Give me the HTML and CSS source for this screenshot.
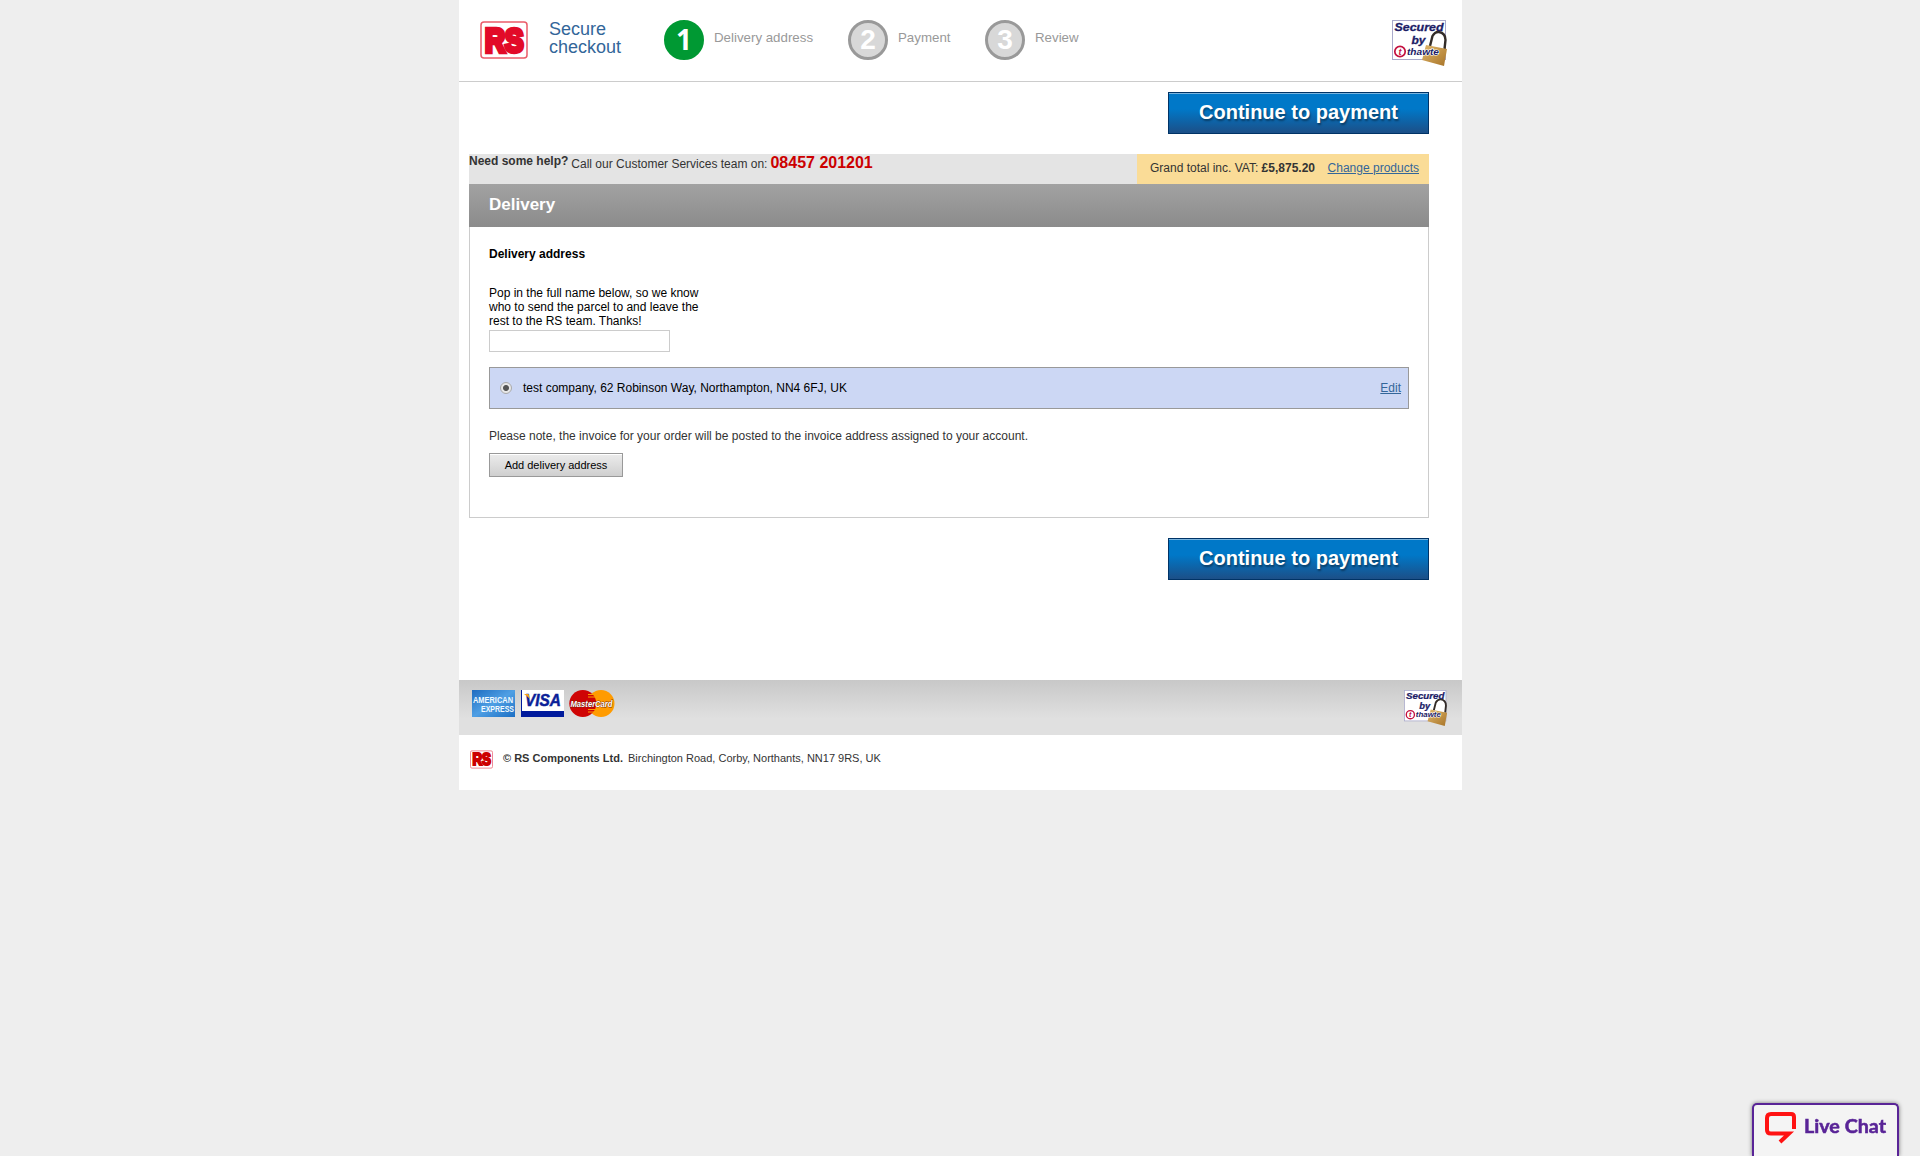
FILE: index.html
```html
<!DOCTYPE html>
<html lang="en">
<head>
<meta charset="utf-8">
<title>Secure checkout</title>
<link rel="stylesheet" href="styles.css">
</head>
<body>
<svg class="defs" aria-hidden="true">
  <defs>
    <linearGradient id="brass" x1="0" y1="0" x2="1" y2="1"><stop offset="0" stop-color="#e0b76c"/><stop offset="1" stop-color="#a87428"/></linearGradient>
    <linearGradient id="amex" x1="0" y1="0" x2="1" y2="1"><stop offset="0" stop-color="#1f6cc0"/><stop offset=".5" stop-color="#4f9fe4"/><stop offset="1" stop-color="#1c6fc4"/></linearGradient>
    <symbol id="rs" viewBox="0 0 48 38">
      <rect x="1" y="1" width="46" height="36" rx="3" fill="#fff" stroke="#ea5c6a" stroke-width="1.5"/>
      <text x="5" y="31" font-size="33" font-weight="bold" textLength="38.5" lengthAdjust="spacingAndGlyphs" fill="currentColor" stroke="currentColor" stroke-width="4.4" stroke-linejoin="miter">RS</text>
    </symbol>
    <symbol id="thawte" viewBox="0 0 56 46">
      <rect x=".5" y=".5" width="53" height="39" fill="#fff" stroke="#aaaacb"/>
      <path d="M38 26L40.5 16Q43 11.5 47 12Q53.5 13 53.5 20L52.5 29" fill="#fff" stroke="#332c28" stroke-width="2.4"/>
      <path d="M34 25L55 29L52 46L30 40Z" fill="url(#brass)"/>
      <g fill="#1c1c66" stroke="#1c1c66" stroke-width=".3" font-weight="bold" font-style="italic">
        <text x="2.5" y="11.3" font-size="11" textLength="49" lengthAdjust="spacingAndGlyphs">Secured</text>
        <text x="19.5" y="24.3" font-size="11" textLength="14" lengthAdjust="spacingAndGlyphs">by</text>
        <text x="15" y="34.8" font-size="9" textLength="32" lengthAdjust="spacingAndGlyphs" stroke="#fff" stroke-width="1.2" paint-order="stroke">thawte</text>
      </g>
      <circle cx="8" cy="31.5" r="5.2" fill="#fff" stroke="#c4103f" stroke-width="1.7"/>
      <text x="6.4" y="34.8" font-size="9" font-weight="bold" font-style="italic" fill="#c4103f">t</text>
    </symbol>
  </defs>
</svg>

<div class="page">
  <header class="header">
    <svg class="logo" width="48" height="38"><use href="#rs"/></svg>
    <h1 class="title">Secure<br>checkout</h1>
    <ol class="steps">
      <li class="step step-one"><span class="num num-active">1</span><span class="label">Delivery address</span></li>
      <li class="step step-two"><span class="num">2</span><span class="label">Payment</span></li>
      <li class="step"><span class="num">3</span><span class="label">Review</span></li>
    </ol>
    <svg class="seal" width="56" height="46"><use href="#thawte"/></svg>
  </header>

  <main class="main">
    <div class="actions"><button class="primary">Continue to payment</button></div>
    <div class="infobar">
      <div class="help"><strong class="need">Need some help?</strong><span class="call">Call our Customer Services team on:</span><strong class="phone">08457 201201</strong></div>
      <div class="total"><span>Grand total inc. VAT: <strong>£5,875.20</strong></span><a href="#">Change products</a></div>
    </div>
    <section class="panel">
      <h2 class="panel-head">Delivery</h2>
      <div class="panel-body">
        <h3 class="subhead">Delivery address</h3>
        <label class="intro" for="name">Pop in the full name below, so we know<br>who to send the parcel to and leave the<br>rest to the RS team. Thanks!</label>
        <input class="name" id="name" type="text">
        <div class="address">
          <span class="radio"></span>
          <span class="address-text">test company, 62 Robinson Way, Northampton, NN4 6FJ, UK</span>
          <a href="#">Edit</a>
        </div>
        <p class="note">Please note, the invoice for your order will be posted to the invoice address assigned to your account.</p>
        <button class="secondary">Add delivery address</button>
      </div>
    </section>
    <div class="actions actions-bottom"><button class="primary">Continue to payment</button></div>
  </main>

  <div class="cards">
    <svg width="43" height="27" viewBox="0 0 43 27">
      <rect width="43" height="27" fill="url(#amex)"/>
      <g font-size="8.4" font-weight="bold" fill="#f2faff">
        <text x="1" y="12.5" textLength="40" lengthAdjust="spacingAndGlyphs">AMERICAN</text>
        <text x="9" y="21.5" textLength="33" lengthAdjust="spacingAndGlyphs">EXPRESS</text>
      </g>
    </svg>
    <svg class="visa" width="43" height="27" viewBox="0 0 43 27">
      <path d="M0 0H43V27H0Z" fill="#fff"/><path d="M0 21H43V27H0ZM0 0H1V27H0Z" fill="#001a9c"/>
      <text x="4" y="16.3" font-size="17" font-weight="bold" font-style="italic" fill="#0b1f98" stroke="#0b1f98" stroke-width=".5" textLength="36" lengthAdjust="spacingAndGlyphs">VISA</text>
      <path d="M3 4H7.5L9 9Q6 6 3 4Z" fill="#f5a01a"/>
    </svg>
    <svg class="mc" width="46" height="27" viewBox="0 0 46 27">
      <circle cx="32" cy="13.5" r="13.5" fill="#ff9b00"/><circle cx="13.8" cy="13.5" r="13.5" fill="#cf0404"/>
      <path d="M19 4.5H26M19 7H27M19 19.5H27M19 22H26" stroke="#ff9b00" stroke-width="1"/>
      <text x="1.5" y="16.8" font-size="9.5" font-weight="bold" font-style="italic" fill="#fff" stroke="#70230c" stroke-width=".8" paint-order="stroke" textLength="42" lengthAdjust="spacingAndGlyphs">MasterCard</text>
    </svg>
    <svg class="seal-small" width="44" height="36"><use href="#thawte"/></svg>
  </div>
  <footer class="footer">
    <svg class="logo-small" width="23" height="19"><use href="#rs"/></svg>
    <strong class="company">© RS Components Ltd.</strong><span>Birchington Road, Corby, Northants, NN17 9RS, UK</span>
  </footer>
</div>

<div class="chat">
  <svg width="32" height="32" viewBox="0 0 32 32"><path d="M29 17V5Q29 2 26 2H6Q2 2 2 6V18Q2 21.5 6 21.5H24L15 30" fill="none" stroke="#ff1212" stroke-width="4"/></svg>
  <svg class="chat-label" width="84" height="22"><text x="0" y="15.5" textLength="82" lengthAdjust="spacingAndGlyphs">Live Chat</text></svg>
</div>
</body>
</html>
```
FILE: styles.css
```css
* { box-sizing: border-box; }
body {
  margin: 0;
  height: 1156px;
  overflow: hidden;
  background: #eee;
  color: #333;
  font: 12px/14px "Liberation Sans", Arial, sans-serif;
}
h1, h2, h3, p, ol { margin: 0; padding: 0; font-weight: normal; }
a { color: #369; text-decoration: underline; }
button { font-family: inherit; padding: 0; border-radius: 0; display: block; }
svg { display: block; flex: none; }
.defs { position: absolute; width: 0; height: 0; }
.page { width: 1003px; height: 790px; margin-left: 459px; background: #fff; white-space: nowrap; }

.header { display: flex; align-items: flex-start; height: 82px; border-bottom: 1px solid #ccc; padding: 20px 14px 0 21px; }
.logo { margin-top: 1px; color: #e20a28; }
.title { width: 115px; margin-left: 21px; font-size: 18px; line-height: 18px; color: #369; }
.steps { display: flex; list-style: none; }
.step { display: flex; }
.step-one { width: 184px; }
.step-two { width: 137px; }
.num { width: 40px; height: 40px; border-radius: 50%; border: 3px solid #999; background: #d8d8d8; color: #fff; font-size: 28px; font-weight: bold; line-height: 33px; text-align: center; }
.num-active { border-color: #093; background: #093; font-family: "Noto Sans", sans-serif; }
.label { margin-left: 10px; margin-top: 10px; font-size: 13.3px; line-height: 16px; color: #999; }
.seal { margin-left: auto; }

.main { padding: 10px 33px 0 10px; height: 598px; }
.actions { display: flex; justify-content: flex-end; }
.actions-bottom { margin-top: 20px; }
.primary {
  width: 261px; height: 42px;
  border: 1px solid #036;
  background: linear-gradient(#0078c8 0, #0078c8 40%, #1c4f87 100%);
  box-shadow: inset 0 1px #79b4de;
  color: #fff; font-size: 20px; font-weight: bold; line-height: 22px; padding-bottom: 3px;
  text-shadow: 1px 2px 2px rgba(0, 0, 0, .4);
}
.infobar { display: flex; height: 30px; margin-top: 20px; background: #e4e4e4; }
.help { flex: 1; display: flex; }
.call { margin: 3px 3px 0 3px; }
.phone { font-size: 16px; line-height: 18px; color: #c00; }
.total { width: 292px; background: #fadc97; display: flex; justify-content: space-between; padding: 7px 10px 0 13px; }
.panel-head { height: 43px; padding: 11px 20px; background: linear-gradient(#a2a2a2, #8b8b8b); color: #fff; font-size: 17px; line-height: 19px; font-weight: bold; }
.panel-body { height: 291px; border: 1px solid #ccc; border-top: 0; padding: 20px 19px 0; color: #000; }
.subhead { font-size: 12px; line-height: 14px; font-weight: bold; }
.intro { display: block; margin-top: 25px; }
.name { display: block; width: 181px; height: 22px; margin-top: 2px; border: 1px solid #ccc; background: #fff; }
.address { display: flex; align-items: center; height: 42px; margin-top: 15px; padding: 0 7px 0 10px; border: 1px solid #999; background: #ccd7f4; }
.radio { width: 12px; height: 12px; border: 1px solid #aaa; border-radius: 50%; background: radial-gradient(circle, #555 0 2.5px, #e8e8e8 3.5px); }
.address-text { margin-left: 11px; margin-right: auto; }
.note { margin-top: 20px; color: #333; }
.secondary { width: 134px; height: 24px; margin-top: 10px; border: 1px solid #999; background: linear-gradient(#ececec, #cfcfcf); box-shadow: inset 0 1px #fff; color: #000; font-size: 11px; }

.cards { display: flex; height: 55px; padding: 10px 14px 0 13px; background: linear-gradient(#c8c8c8, #e0e0e0 70%); }
.visa { margin-left: 6px; }
.mc { margin-left: 5px; }
.seal-small { margin-left: auto; }
.footer { display: flex; padding: 16px 0 0 11px; font-size: 11px; line-height: 14px; }
.logo-small { margin-top: -1px; color: #cc0000; }
.company { margin: 0 5px 0 10px; }

.chat { position: fixed; left: 1752px; bottom: 0; width: 147px; height: 53px; display: flex; padding: 7px 0 0 11px; border: 2px solid #592497; border-bottom: 0; border-radius: 5px 5px 0 0; background: #f4f4f4; box-shadow: 0 0 4px rgba(0, 0, 0, .5); }
.chat-label { margin-left: 7px; margin-top: 5px; overflow: visible; }
.chat-label text { font: bold 18px Lato, sans-serif; fill: #592497; stroke: #592497; stroke-width: .5px; }
```
